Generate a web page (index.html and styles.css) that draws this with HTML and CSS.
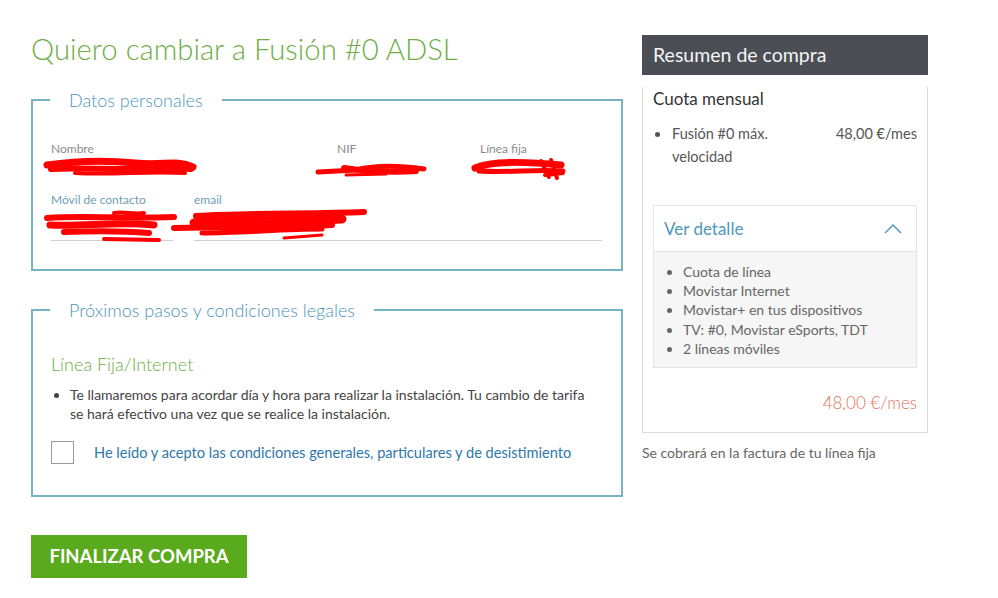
FILE: index.html
```html
<!DOCTYPE html>
<html lang="es">

<head>
    <meta charset="UTF-8">
    <meta name="viewport" content="width=device-width, initial-scale=1.0">
    <title>Resumen de compra</title>
    <link rel="stylesheet" href="styles.css">
</head>

<body>
    <div class="page">
        <div class="main">
            <h1 class="title">Quiero cambiar a Fusión #0 ADSL</h1>

            <fieldset class="box">
                <legend>Datos personales</legend>
                <div class="fields">
                    <div class="field wide">
                        <span class="label">Nombre</span>
                        <div class="value">
                            <svg class="mark" width="150" height="22" viewBox="0 0 150 22">
                                <path d="M2 8 C30 4 60 3 90 6 S130 2 148 10" stroke="red" stroke-width="7" fill="none" stroke-linecap="round"/>
                                <path d="M6 12 C40 10 80 14 120 11 L146 12" stroke="red" stroke-width="6" fill="none" stroke-linecap="round"/>
                                <path d="M30 16 C70 18 100 14 140 16" stroke="red" stroke-width="4" fill="none" stroke-linecap="round"/>
                            </svg>
                        </div>
                    </div>
                    <div class="field">
                        <span class="label">NIF</span>
                        <div class="value">
                            <svg class="mark nif" width="112" height="20" viewBox="0 0 112 20">
                                <path d="M2 13 L40 11 C60 6 80 6 108 10" stroke="red" stroke-width="5" fill="none" stroke-linecap="round"/>
                                <path d="M28 9 C50 12 75 14 100 12" stroke="red" stroke-width="6" fill="none" stroke-linecap="round"/>
                                <path d="M30 16 L70 15" stroke="red" stroke-width="3" fill="none" stroke-linecap="round"/>
                            </svg>
                        </div>
                    </div>
                    <div class="field">
                        <span class="label">Línea fija</span>
                        <div class="value">
                            <svg class="mark fija" width="96" height="24" viewBox="0 0 96 24">
                                <path d="M4 11 C20 4 50 4 90 8" stroke="red" stroke-width="7" fill="none" stroke-linecap="round"/>
                                <path d="M8 14 C40 16 60 12 92 14" stroke="red" stroke-width="5" fill="none" stroke-linecap="round"/>
                                <path d="M70 4 L78 20 M80 3 L86 21 M74 18 L92 16" stroke="red" stroke-width="4" fill="none" stroke-linecap="round"/>
                            </svg>
                        </div>
                    </div>
                    <div class="field line">
                        <span class="label blue">Móvil de contacto</span>
                        <div class="value">
                            <svg class="mark movil" width="134" height="34" viewBox="0 0 134 34">
                                <path d="M3 9 C40 6 70 10 130 8" stroke="red" stroke-width="6" fill="none" stroke-linecap="round"/>
                                <path d="M6 16 C40 18 70 12 110 16" stroke="red" stroke-width="7" fill="none" stroke-linecap="round"/>
                                <path d="M20 23 C50 22 80 22 105 24" stroke="red" stroke-width="6" fill="none" stroke-linecap="round"/>
                                <path d="M60 30 L115 31" stroke="red" stroke-width="4" fill="none" stroke-linecap="round"/>
                                <path d="M70 4 C80 2 90 6 100 4" stroke="red" stroke-width="4" fill="none" stroke-linecap="round"/>
                            </svg>
                        </div>
                    </div>
                    <div class="field line span3">
                        <span class="label blue">email</span>
                        <div class="value">
                            <svg class="mark email" width="196" height="32" viewBox="0 0 196 32">
                                <path d="M24 7 C80 4 140 5 192 3" stroke="red" stroke-width="6" fill="none" stroke-linecap="round"/>
                                <path d="M22 14 C70 11 120 12 170 10" stroke="red" stroke-width="9" fill="none" stroke-linecap="round"/>
                                <path d="M2 19 L60 18 C90 20 130 17 160 16" stroke="red" stroke-width="6" fill="none" stroke-linecap="round"/>
                                <path d="M30 24 C70 24 110 20 150 20" stroke="red" stroke-width="5" fill="none" stroke-linecap="round"/>
                                <path d="M112 29 L150 26" stroke="red" stroke-width="3" fill="none" stroke-linecap="round"/>
                            </svg>
                        </div>
                    </div>
                </div>
            </fieldset>

            <fieldset class="box steps">
                <legend>Próximos pasos y condiciones legales</legend>
                <h2 class="subtitle">Línea Fija/Internet</h2>
                <ul class="notes">
                    <li>Te llamaremos para acordar día y hora para realizar la instalación. Tu cambio de tarifa se hará efectivo una vez que se realice la instalación.</li>
                </ul>
                <label class="accept">
                    <span class="check"></span>
                    <span>He leído y acepto las condiciones generales, particulares y de desistimiento</span>
                </label>
            </fieldset>

            <a href="#" class="btn">FINALIZAR COMPRA</a>
        </div>

        <div class="side">
            <div class="summary">
                <div class="summary-head">Resumen de compra</div>
                <div class="summary-body">
                    <div class="fee">Cuota mensual</div>
                    <ul class="items">
                        <li>
                            <span class="item-name">Fusión #0 máx. velocidad</span>
                            <span class="item-price">48,00 €/mes</span>
                        </li>
                    </ul>

                    <div class="detail">
                        <div class="detail-head">
                            <span>Ver detalle</span>
                            <svg width="18" height="10" viewBox="0 0 18 10">
                                <path d="M1 9 L9 1 L17 9" stroke="#4f97bc" stroke-width="1.4" fill="none"/>
                            </svg>
                        </div>
                        <ul class="detail-list">
                            <li>Cuota de línea</li>
                            <li>Movistar Internet</li>
                            <li>Movistar+ en tus dispositivos</li>
                            <li>TV: #0, Movistar eSports, TDT</li>
                            <li>2 líneas móviles</li>
                        </ul>
                    </div>

                    <div class="total">48,00 €/mes</div>
                </div>
            </div>
            <p class="bill">Se cobrará en la factura de tu línea fija</p>
        </div>
    </div>
</body>

</html>
```

FILE: styles.css
```css
body {
    margin: 0;
    background: #fff;
    font-family: Lato, "Open Sans", sans-serif;
    color: #444;
}

.page {
    display: flex;
    gap: 19px;
    padding: 29px 0 0 31px;
}

.main {
    width: 592px;
}

.title {
    margin: 0 0 20px;
    font-size: 29.3px;
    font-weight: 300;
    line-height: 40px;
    color: #6cae45;
}

.box {
    margin: 0;
    padding: 0 20px 28px 18px;
    border: 2px solid #78b3c4;
    min-width: 0;
}

.box legend {
    margin-left: -1px;
    padding: 0 19px 0 19px;
    font-size: 18px;
    font-weight: 300;
    line-height: 22px;
    color: #4d94bb;
}

.fields {
    display: grid;
    grid-template-columns: repeat(4, 143px);
    row-gap: 10px;
    margin-top: 30px;
}

.field {
    padding-right: 21px;
}

.field.wide {
    grid-column: span 2;
}

.field.span3 {
    grid-column: span 3;
}

.label {
    display: block;
    font-size: 12px;
    line-height: 16px;
    color: #8a8a8a;
}

.label.blue {
    color: #6f9dbb;
}

.value {
    height: 23px;
}

.line .value {
    height: 31px;
    border-bottom: 1px solid #d0d0d0;
}

.mark {
    display: block;
    overflow: visible;
    margin-left: -6px;
}

.mark.nif {
    margin-left: -21px;
    margin-top: 2px;
}

.mark.fija {
    margin-left: -9px;
}

.mark.movil {
    margin-left: -7px;
    margin-top: 1px;
}

.mark.email {
    margin-left: -22px;
    margin-top: 1px;
}

.steps {
    margin-top: 28px;
    padding-bottom: 31px;
}

.subtitle {
    margin: 31px 0 0;
    font-size: 18px;
    font-weight: 300;
    line-height: 24px;
    color: #6cae45;
}

.notes {
    margin: 9px 0 0;
    padding-left: 19px;
    max-width: 525px;
    font-size: 14px;
    line-height: 19px;
    color: #444;
}

.accept {
    display: flex;
    align-items: center;
    gap: 20px;
    margin-top: 18px;
    font-size: 14.6px;
    color: #2f78aa;
}

.check {
    width: 21px;
    height: 21px;
    border: 1px solid #9a9a9a;
    flex: none;
}

.btn {
    display: inline-block;
    margin-top: 38px;
    width: 216px;
    height: 43px;
    line-height: 43px;
    text-align: center;
    background: #5aaa1d;
    color: #fff;
    font-size: 18.5px;
    font-weight: 700;
    text-decoration: none;
}

.side {
    width: 286px;
    margin-top: 6px;
}

.summary-head {
    height: 40px;
    line-height: 40px;
    padding-left: 11px;
    background: #4b4e54;
    color: #f5f5f5;
    font-size: 19.5px;
}

.summary-body {
    border: 1px solid #dcdcdc;
    border-top: 0;
    padding: 0 10px 19px;
}

.fee {
    margin-top: 12px;
    font-size: 17px;
    line-height: 24px;
    color: #333;
}

.items {
    margin: 11px 0 0;
    padding: 0;
    list-style: none;
    font-size: 14.5px;
    line-height: 23px;
    color: #555;
}

.items li {
    display: flex;
    justify-content: space-between;
    position: relative;
    padding-left: 19px;
}

.items li::before {
    content: "";
    position: absolute;
    left: 2px;
    top: 10px;
    width: 5px;
    height: 5px;
    border-radius: 50%;
    background: #555;
}

.item-name {
    width: 120px;
}

.detail {
    margin-top: 37px;
    border: 1px solid #e4e4e4;
}

.detail-head {
    display: flex;
    justify-content: space-between;
    align-items: center;
    height: 45px;
    padding: 0 14px 0 10px;
    border-bottom: 1px solid #e4e4e4;
    font-size: 17px;
    color: #4f97bc;
}

.detail-list {
    margin: 0;
    padding: 10px 0 9px 29px;
    background: #f6f6f6;
    font-size: 14px;
    line-height: 19.2px;
    color: #666;
}

.total {
    margin-top: 24px;
    text-align: right;
    font-size: 17px;
    font-weight: 300;
    color: #e4735a;
}

.bill {
    margin: 11px 0 0;
    font-size: 14px;
    color: #666;
}
```
